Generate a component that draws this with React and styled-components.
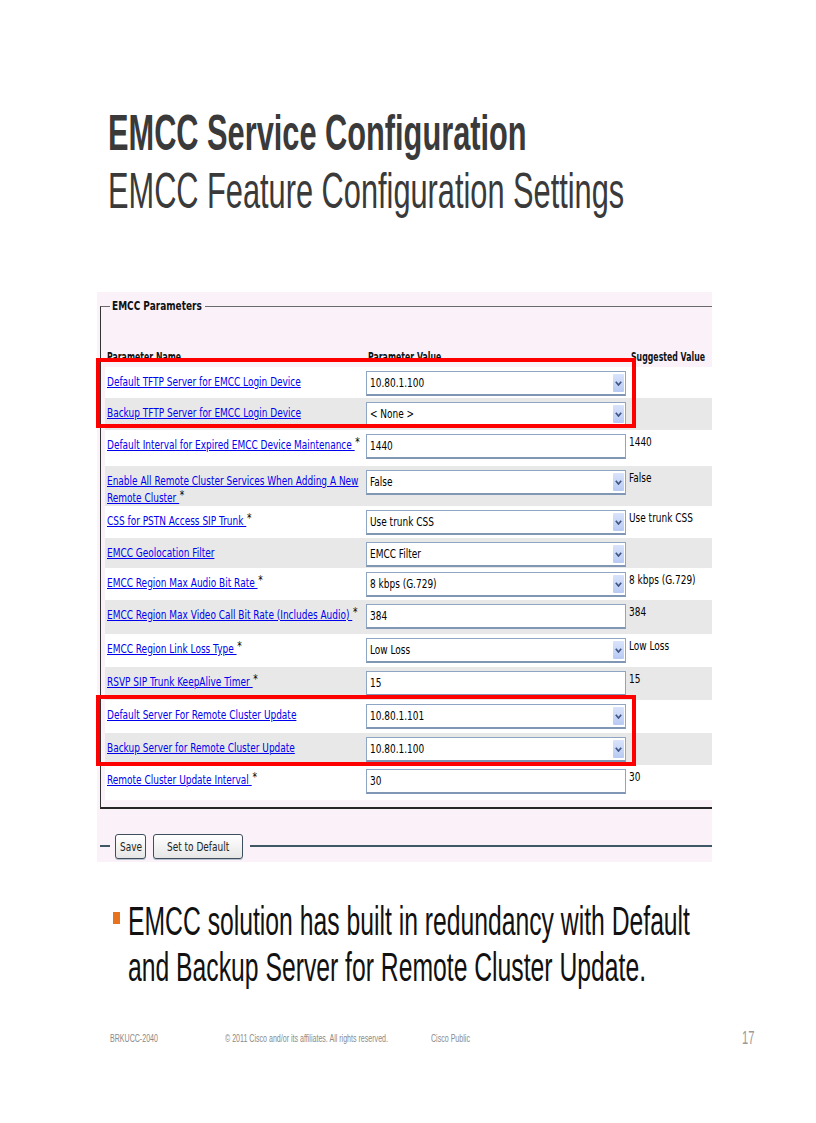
import React from "react";
import styled, { createGlobalStyle } from "styled-components";

const GlobalStyle = createGlobalStyle`
  html, body {
    margin: 0;
    padding: 0;
    background: #fff;
  }
  body {
    font-family: "Liberation Sans", Arial, sans-serif;
  }
`;

const rows = [
  { label: "Default TFTP Server for EMCC Login Device", kind: "select", value: "10.80.1.100", h: 31 },
  { label: "Backup TFTP Server for EMCC Login Device", kind: "select", value: "< None >", h: 32 },
  { label: "Default Interval for Expired EMCC Device Maintenance ", star: true, kind: "input", value: "1440", suggested: "1440", h: 36 },
  { label: ["Enable All Remote Cluster Services When Adding A New", "Remote Cluster "], star: true, kind: "select", value: "False", suggested: "False", h: 40 },
  { label: "CSS for PSTN Access SIP Trunk ", star: true, kind: "select", value: "Use trunk CSS", suggested: "Use trunk CSS", h: 32 },
  { label: "EMCC Geolocation Filter", kind: "select", value: "EMCC Filter", h: 30 },
  { label: "EMCC Region Max Audio Bit Rate ", star: true, kind: "select", value: "8 kbps (G.729)", suggested: "8 kbps (G.729)", h: 32 },
  { label: "EMCC Region Max Video Call Bit Rate (Includes Audio) ", star: true, kind: "input", value: "384", suggested: "384", h: 34 },
  { label: "EMCC Region Link Loss Type ", star: true, kind: "select", value: "Low Loss", suggested: "Low Loss", h: 33 },
  { label: "RSVP SIP Trunk KeepAlive Timer ", star: true, kind: "input", value: "15", suggested: "15", h: 33 },
  { label: "Default Server For Remote Cluster Update", kind: "select", value: "10.80.1.101", h: 33 },
  { label: "Backup Server for Remote Cluster Update", kind: "select", value: "10.80.1.100", h: 32 },
  { label: "Remote Cluster Update Interval ", star: true, kind: "input", value: "30", suggested: "30", h: 35 },
];

export default function App() {
  return (
    <Page>
      <GlobalStyle />
      <Title $bold>
        <Squeeze $k={0.615}>EMCC Service Configuration</Squeeze>
      </Title>
      <Title>
        <Squeeze $k={0.615}>EMCC Feature Configuration Settings</Squeeze>
      </Title>

      <Panel>
        <Fieldset>
          <Legend>
            <Squeeze>EMCC Parameters</Squeeze>
          </Legend>
          <HeaderRow>
            <HeadCell><Squeeze $k={0.6}>Parameter Name</Squeeze></HeadCell>
            <HeadCell><Squeeze $k={0.6}>Parameter Value</Squeeze></HeadCell>
            <HeadCell><Squeeze $k={0.6}>Suggested Value</Squeeze></HeadCell>
          </HeaderRow>
          {rows.map((r, i) => (
            <Row key={i} $h={r.h} $alt={i % 2 === 1}>
              <NameCell>
                <Squeeze>
                  <ParamLink href="#">
                    {Array.isArray(r.label) ? (
                      <>
                        {r.label[0]}
                        <br />
                        {r.label[1]}
                      </>
                    ) : (
                      r.label
                    )}
                  </ParamLink>
                  {r.star && <Star>*</Star>}
                </Squeeze>
              </NameCell>
              <ValueCell>
                <Field>
                  <Squeeze>{r.value}</Squeeze>
                  {r.kind === "select" && (
                    <DropArrow>
                      <svg width="7" height="5" viewBox="0 0 7 5">
                        <path d="M0.8 0.8 L3.5 4 L6.2 0.8" fill="none" stroke="#3f5686" strokeWidth="1.7" />
                      </svg>
                    </DropArrow>
                  )}
                </Field>
              </ValueCell>
              <SuggestCell>
                {r.suggested && <Squeeze>{r.suggested}</Squeeze>}
              </SuggestCell>
            </Row>
          ))}
        </Fieldset>

        <ButtonBar>
          <BarLine $w="10px" />
          <Button $w="31px">
            <Squeeze $origin="50% 50%">Save</Squeeze>
          </Button>
          <Button $w="90px">
            <Squeeze $origin="50% 50%">Set to Default</Squeeze>
          </Button>
          <BarLine />
        </ButtonBar>

        <Highlight $top={66} $h={70} />
        <Highlight $top={403} $h={71} />
      </Panel>

      <BulletRow>
        <BulletMark />
        <BulletText>
          <Squeeze $k={0.618}>
            EMCC solution has built in redundancy with Default
            <br />
            and Backup Server for Remote Cluster Update.
          </Squeeze>
        </BulletText>
      </BulletRow>

      <Footer>
        <FootText><Squeeze $k={0.615}>BRKUCC-2040</Squeeze></FootText>
        <FootText><Squeeze $k={0.615}>© 2011 Cisco and/or its affiliates. All rights reserved.</Squeeze></FootText>
        <FootText><Squeeze $k={0.615}>Cisco Public</Squeeze></FootText>
        <PageNum><Squeeze $k={0.615}>17</Squeeze></PageNum>
      </Footer>
    </Page>
  );
}

const Page = styled.div`
  width: 816px;
  height: 1123px;
  box-sizing: border-box;
  padding-top: 104px;
  background: #fff;
  overflow: hidden;
`;

const Squeeze = styled.span`
  display: inline-block;
  white-space: nowrap;
  transform: scaleX(${(p) => p.$k ?? 0.69});
  transform-origin: ${(p) => p.$origin ?? "0 50%"};
`;

const Title = styled.h1`
  margin: 0 0 0 108px;
  font-size: 50px;
  line-height: 58px;
  font-weight: ${(p) => (p.$bold ? 700 : 400)};
  color: #3a3a3a;
`;

const Panel = styled.section`
  position: relative;
  margin: 72px 0 0 97px;
  width: 615px;
  height: 570px;
  box-sizing: border-box;
  padding: 6px 0 0 3px;
  background: #fbf2f9;
  font-family: "DejaVu Sans", Verdana, sans-serif;
  font-size: 13px;
  line-height: 16px;
  color: #111;
`;

const Fieldset = styled.fieldset`
  margin: 0;
  padding: 0 0 7px 4px;
  min-inline-size: 0;
  border: none;
  border-top: 1px solid #6a6a6a;
  border-left: 1px solid #333;
  border-bottom: 2px solid #262626;
`;

const Legend = styled.legend`
  margin-left: 5px;
  padding: 0 5px 0 2px;
  width: 95px;
  box-sizing: border-box;
  font-weight: bold;
  line-height: 16px;
  color: #111;
`;

const HeaderRow = styled.div`
  display: grid;
  grid-template-columns: 261px 263px 1fr;
  height: 22px;
  margin-top: 31px;
  font-weight: bold;
  color: #111;
`;

const HeadCell = styled.div`
  padding: 4px 0 0 2px;
`;

const Row = styled.div`
  display: grid;
  grid-template-columns: 261px 263px 1fr;
  height: ${(p) => p.$h}px;
  background: ${(p) => (p.$alt ? "#e8e8e8" : "#fff")};
`;

const NameCell = styled.div`
  padding: 6px 0 0 2px;
  line-height: 17px;
`;

const ParamLink = styled.a`
  color: #0000ee;
  text-decoration: underline;
`;

const Star = styled.span`
  position: relative;
  top: -3px;
  margin-left: 1px;
  color: #000;
`;

const ValueCell = styled.div`
  padding-top: 4px;
`;

const Field = styled.div`
  display: flex;
  align-items: center;
  justify-content: space-between;
  width: 260px;
  height: 25px;
  box-sizing: border-box;
  padding: 0 1px 0 3px;
  background: #fff;
  border: 1px solid #8ea6c4;
  border-bottom: 2px solid #7f97b5;
  color: #000;
`;

const DropArrow = styled.div`
  display: flex;
  align-items: center;
  justify-content: center;
  width: 11px;
  height: 18px;
  background: linear-gradient(#d9e3fb, #b8caf3);
  border-radius: 1px;
`;

const SuggestCell = styled.div`
  padding: 4px 0 0 0;
  color: #000;
`;

const ButtonBar = styled.div`
  display: flex;
  align-items: center;
  gap: 7px;
  height: 26px;
  margin-top: 24px;
`;

const BarLine = styled.div`
  flex: ${(p) => (p.$w ? `0 0 ${p.$w}` : "1")};
  height: 2px;
  background: #3e5866;
  margin-right: ${(p) => (p.$w ? "-2px" : "0")};
`;

const Button = styled.button`
  display: flex;
  align-items: center;
  justify-content: center;
  width: ${(p) => p.$w};
  height: 25px;
  padding: 0;
  overflow: visible;
  font-family: "DejaVu Sans", Verdana, sans-serif;
  font-size: 13px;
  color: #222;
  background: linear-gradient(#ffffff, #e6e6e6);
  border: 1px solid #3f4d5c;
  border-radius: 3px;
  box-shadow: 0 1px 0 #b9c2cc;
`;

const Highlight = styled.div`
  position: absolute;
  left: -1px;
  top: ${(p) => p.$top}px;
  width: 540px;
  height: ${(p) => p.$h}px;
  box-sizing: border-box;
  border: 4px solid #ff0000;
  pointer-events: none;
`;

const BulletRow = styled.div`
  display: flex;
  align-items: flex-start;
  gap: 10px;
  margin: 36px 0 0 113px;
`;

const BulletMark = styled.span`
  flex: 0 0 7px;
  height: 12px;
  margin-top: 14px;
  background: #e8731e;
`;

const BulletText = styled.p`
  margin: 0 0 0 -2px;
  font-size: 40px;
  line-height: 46px;
  color: #111;
`;

const Footer = styled.footer`
  display: grid;
  grid-template-columns: 115px 206px 311px auto;
  align-items: center;
  height: 20px;
  margin: 38px 0 0 110px;
  color: #8a8a8a;
`;

const FootText = styled.span`
  font-size: 11.5px;
  line-height: 14px;
`;

const PageNum = styled.span`
  font-size: 18px;
  line-height: 20px;
  color: #999;
`;
